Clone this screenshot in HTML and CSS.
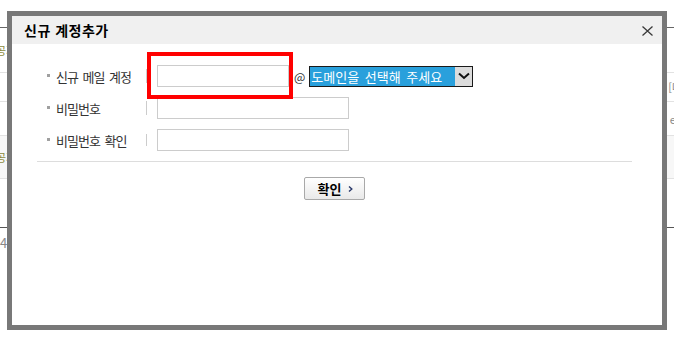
FILE: index.html
```html
<!DOCTYPE html>
<html lang="ko">
<head>
    <meta charset="UTF-8">
    <title>신규 계정추가</title>
    <link rel="stylesheet" href="styles.css">
</head>
<body>
    <!-- page behind the layer -->
    <div class="board">
        <div class="board-row row-a"><span class="tag">공지</span></div>
        <div class="board-row row-b"><span class="side">[미</span></div>
        <div class="board-row row-c"><span class="side">e2</span></div>
        <div class="board-row row-d"><span class="tag">공지</span></div>
        <div class="board-foot"><span class="num">4</span></div>
    </div>

    <!-- account layer -->
    <div class="layer">
        <div class="layer-head">
            <h2>신규 계정추가</h2>
            <button class="close" type="button">
                <svg width="11" height="10" viewBox="0 0 11 10">
                    <path d="M0.5 0.5 L10.5 9.5 M10.5 0.5 L0.5 9.5" stroke="#3a3a3a" stroke-width="1.3" fill="none"/>
                </svg>
            </button>
        </div>
        <div class="layer-body">
            <div class="form-row">
                <span class="label">신규 메일 계정</span>
                <span class="sep"></span>
                <input type="text" class="field field-short">
                <span class="at">@</span>
                <span class="select">
                    <span class="select-text">도메인을 선택해 주세요</span>
                    <span class="select-arrow">
                        <svg width="12" height="8" viewBox="0 0 12 8">
                            <path d="M1 1.5 L6 6 L11 1.5" stroke="#111" stroke-width="2" fill="none"/>
                        </svg>
                    </span>
                </span>
            </div>
            <div class="form-row">
                <span class="label">비밀번호</span>
                <span class="sep"></span>
                <input type="password" class="field">
            </div>
            <div class="form-row">
                <span class="label">비밀번호 확인</span>
                <span class="sep sep-small"></span>
                <input type="password" class="field">
            </div>

            <div class="divider"></div>

            <div class="actions">
                <button class="btn-ok" type="button">
                    확인
                    <svg width="5" height="6" viewBox="0 0 5 6">
                        <path d="M1 0.5 L3.8 3 L1 5.5" stroke="#2b3a6b" stroke-width="1.4" fill="none"/>
                    </svg>
                </button>
            </div>
        </div>
    </div>

    <!-- red highlight over the account field -->
    <div class="mark"></div>
</body>
</html>
```

FILE: styles.css
```css
/* Base */
body {
    margin: 0;
    background: #fff;
    font-family: "Noto Sans CJK KR", "Noto Sans", sans-serif;
    font-size: 12px;
    color: #333;
}

/* Page behind the layer */
.board {
    margin-top: 27px;
    border-top: 1px solid #666;
}

.board-row {
    display: flex;
    align-items: center;
    justify-content: space-between;
    border-bottom: 1px solid #e2e2e2;
}

.row-a { height: 44px; }
.row-b { height: 28px; }
.row-c { height: 33px; }
.row-d { height: 42px; background: #f7f7f7; }

.tag {
    color: #8a8a3c;
    font-size: 11px;
    margin-left: -4px;
}

.row-b, .row-c {
    justify-content: flex-end;
}

.side {
    color: #888;
    font-size: 11px;
    margin-right: -8px;
}

.board-foot {
    margin-top: 48px;
    border-top: 1px solid #555;
    padding-top: 5px;
}

.num {
    color: #888;
    font-size: 13px;
}

/* Layer */
.layer {
    position: absolute;
    left: 7px;
    top: 11px;
    width: 650px;
    height: 309px;
    border: 5px solid #787878;
    background: #fff;
}

.layer-head {
    height: 28px;
    background: #f0f0f0;
    display: flex;
    align-items: center;
    justify-content: space-between;
    padding: 0 9px 0 12px;
}

.layer-head h2 {
    margin: 0;
    font-size: 14px;
    font-weight: bold;
    letter-spacing: 0.5px;
    color: #000;
    line-height: 1;
}

.close {
    border: 0;
    background: none;
    padding: 0;
    width: 11px;
    height: 10px;
    display: flex;
    margin-top: 1px;
}

.layer-body {
    padding: 21px 30px 0 25px;
}

/* Form rows */
.form-row {
    display: flex;
    align-items: center;
    height: 22px;
    margin-bottom: 10px;
    padding-left: 10px;
}

.label {
    width: 99px;
    display: flex;
    align-items: center;
    white-space: pre;
    font-size: 13px;
    letter-spacing: -1px;
    word-spacing: 2px;
}

.label::before {
    content: "";
    width: 3px;
    height: 3px;
    background: #a0a0a0;
    margin-right: 6px;
    margin-top: -2px;
}

.sep {
    width: 1px;
    height: 14px;
    background: #ccc;
    margin-right: 10px;
}

.sep-small {
    height: 12px;
}

.field {
    width: 192px;
    height: 22px;
    box-sizing: border-box;
    border: 1px solid #ccc;
    margin: 0;
    padding: 0 4px;
    font-size: 12px;
}

.field-short {
    width: 132px;
}

.at {
    margin: 0 4px 0 5px;
    color: #333;
}

/* Domain select (focused) */
.select {
    display: flex;
    width: 164px;
    height: 21px;
    box-sizing: border-box;
    border: 1px solid #1a1a1a;
    background: #fff;
}

.select-text {
    flex: 1;
    background: #29a0dc;
    color: #fff;
    font-size: 13px;
    line-height: 19px;
    padding-left: 1px;
    word-spacing: 2px;
    white-space: nowrap;
    overflow: hidden;
}

.select-arrow {
    width: 17px;
    background: #dcdcdc;
    display: flex;
    align-items: center;
    justify-content: center;
}

.divider {
    height: 1px;
    background: #ddd;
    margin-top: 5px;
}

.actions {
    display: flex;
    justify-content: center;
    margin-top: 15px;
}

.btn-ok {
    width: 61px;
    height: 23px;
    border: 1px solid #a9a9a9;
    border-radius: 2px;
    background: linear-gradient(#ffffff, #e9e9e9);
    font-family: "Noto Sans CJK KR", sans-serif;
    font-size: 13px;
    font-weight: bold;
    color: #000;
    display: flex;
    align-items: center;
    justify-content: center;
    gap: 7px;
    padding: 0 0 0 2px;
}

/* Red annotation box */
.mark {
    position: absolute;
    left: 147px;
    top: 52px;
    width: 138px;
    height: 39px;
    border: 4px solid #ff0000;
}
```
